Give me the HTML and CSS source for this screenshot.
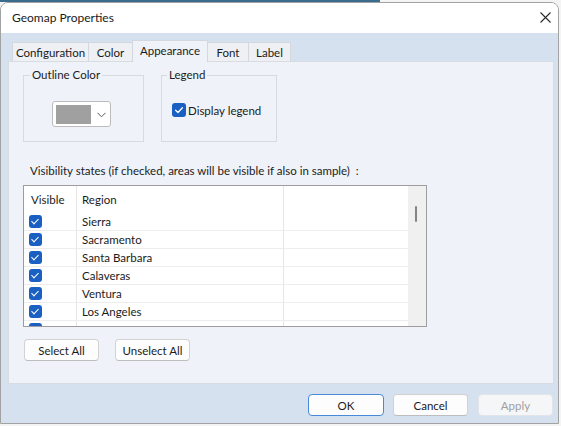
FILE: index.html
```html
<!DOCTYPE html>
<html lang="en">
<head>
<meta charset="utf-8">
<title>Geomap Properties</title>
<link rel="stylesheet" href="styles.css">
</head>
<body>
<div class="topstrip"></div>
<div class="dialog">
  <div class="titlebar">
    <span class="title">Geomap Properties</span>
    <svg class="close" width="11" height="11" viewBox="0 0 11 11"><path d="M0.5 0.5 L10.5 10.5 M10.5 0.5 L0.5 10.5" stroke="#2b2b2b" stroke-width="1.1" fill="none"/></svg>
  </div>
  <div class="client">
    <div class="tabs">
      <div class="tab t-config">Configuration</div>
      <div class="tab t-color">Color</div>
      <div class="tab t-appear active">Appearance</div>
      <div class="tab t-font">Font</div>
      <div class="tab t-label">Label</div>
    </div>
    <div class="panel">
      <div class="groups">
        <fieldset class="group g-outline">
          <legend>Outline Color</legend>
          <div class="combo">
            <span class="swatch"></span>
            <svg class="chev" width="9" height="6" viewBox="0 0 9 6"><path d="M0.5 0.8 L4.5 4.8 L8.5 0.8" stroke="#5a5a5a" stroke-width="1" fill="none"/></svg>
          </div>
        </fieldset>
        <fieldset class="group g-legend">
          <legend>Legend</legend>
          <label class="check-row">
            <span class="cb"><svg width="14" height="14" viewBox="0 0 14 14"><rect x="0" y="0" width="14" height="14" rx="3" fill="#1a5fc2"/><path d="M3.6 7.2 L6 9.5 L10.4 4.8" stroke="#fff" stroke-width="1.3" fill="none" stroke-linecap="round" stroke-linejoin="round"/></svg></span>
            <span>Display legend</span>
          </label>
        </fieldset>
      </div>
      <div class="vis-label">Visibility states (if checked, areas will be visible if also in sample)&nbsp; :</div>
      <div class="list">
        <div class="grid">
          <div class="row head">
            <div class="c1">Visible</div>
            <div class="c2">Region</div>
            <div class="c3"></div>
          </div>
          <div class="row"><div class="c1"><span class="cbs"></span></div><div class="c2">Sierra</div><div class="c3"></div></div>
          <div class="row"><div class="c1"><span class="cbs"></span></div><div class="c2">Sacramento</div><div class="c3"></div></div>
          <div class="row"><div class="c1"><span class="cbs"></span></div><div class="c2">Santa Barbara</div><div class="c3"></div></div>
          <div class="row"><div class="c1"><span class="cbs"></span></div><div class="c2">Calaveras</div><div class="c3"></div></div>
          <div class="row"><div class="c1"><span class="cbs"></span></div><div class="c2">Ventura</div><div class="c3"></div></div>
          <div class="row"><div class="c1"><span class="cbs"></span></div><div class="c2">Los Angeles</div><div class="c3"></div></div>
          <div class="row"><div class="c1"><span class="cbs"></span></div><div class="c2"></div><div class="c3"></div></div>
        </div>
        <div class="vscroll"><span class="thumb"></span></div>
      </div>
      <div class="list-buttons">
        <button class="btn">Select All</button>
        <button class="btn">Unselect All</button>
      </div>
    </div>
    <div class="footer">
      <button class="btn default">OK</button>
      <button class="btn">Cancel</button>
      <button class="btn disabled">Apply</button>
    </div>
  </div>
</div>
</body>
</html>
```
FILE: styles.css
```css
* { box-sizing: border-box; }
html, body { margin: 0; padding: 0; }
body {
  background: #f4f4f4;
  font-family: Lato, "Liberation Sans", Arial, sans-serif;
  font-size: 11.5px;
  color: #1b1b1b;
  width: 561px;
  height: 426px;
  overflow: hidden;
}
.topstrip {
  height: 2px;
  width: 380px;
  background: #3b6c8e;
}
.dialog {
  width: 559px;
  height: 422px;
  border: 1px solid #a2a2a2;
  border-radius: 8px 8px 0 0;
  overflow: hidden;
  display: flex;
  flex-direction: column;
  background: #fff;
}
.titlebar {
  height: 30px;
  flex: none;
  background: #ffffff;
  display: flex;
  align-items: center;
  justify-content: space-between;
  padding: 0 7px 1px 11px;
}
.title { font-size: 12px; color: #1a1a1a; }
.close { display: block; }
.client {
  flex: 1;
  background: #d5e1ef;
  padding: 0 4px 0 7px;
  display: flex;
  flex-direction: column;
}
.tabs {
  height: 28px;
  flex: none;
  display: flex;
  align-items: flex-end;
  padding-left: 4px;
}
.tab {
  height: 19px;
  background: #eef0f4;
  border: 1px solid #d3d8df;
  border-bottom: none;
  display: flex;
  align-items: center;
  justify-content: center;
  color: #1b1b1b;
  margin-right: -1px;
}
.t-config { width: 77px; }
.t-color { width: 45px; }
.t-appear { width: 76px; }
.t-font { width: 42px; }
.t-label { width: 43px; }
.tab.active {
  height: 22px;
  background: #eff2f8;
  border-color: #d3d8df;
  margin-bottom: -1px;
  position: relative;
  z-index: 1;
  padding-bottom: 2px;
}
.panel {
  height: 323px;
  flex: none;
  background: #eff2f8;
  border: 1px solid #d8dce3;
  padding: 0 0 0 14px;
}
.groups {
  display: flex;
  gap: 17px;
  margin-top: 5px;
}
.group {
  margin: 0;
  padding: 0;
  border: 1px solid #d6dae1;
  height: 75px;
  min-width: 0;
}
.group legend {
  padding: 0 2px;
  margin-left: 6px;
  line-height: 16px;
  color: #1b1b1b;
}
.g-outline { width: 121px; }
.g-legend { width: 116px; }
.g-legend legend { margin-left: 5px; }
.combo {
  width: 59px;
  height: 26px;
  margin: 18px 0 0 28px;
  background: #fff;
  border: 1px solid #bcbcbc;
  border-radius: 3px;
  display: flex;
  align-items: center;
  padding: 0 0 0 3px;
}
.swatch {
  width: 35px;
  height: 19px;
  background: #a0a0a0;
}
.chev { margin-left: 6px; margin-top: 2px; }
.check-row {
  display: flex;
  align-items: center;
  gap: 2px;
  margin: 20px 0 0 10px;
}
.cb svg { display: block; }
.vis-label {
  margin-top: 21px;
  line-height: 16px;
  padding-left: 7px;
}
.list {
  margin-top: 6px;
  width: 404px;
  height: 142px;
  border: 1px solid #9d9d9d;
  background: #fff;
  display: flex;
  overflow: hidden;
}
.grid { width: 384px; flex: none; }
.row {
  display: flex;
  height: 18px;
  border-bottom: 1px solid #ededed;
  align-items: stretch;
}
.row.head { height: 27px; border-bottom: none; }
.row > div { display: flex; align-items: center; }
.c1 { width: 53px; padding-left: 5px; border-right: 1px solid #e6e6e6; }
.c2 { width: 207px; padding-left: 5px; border-right: 1px solid #e6e6e6; }
.c3 { flex: 1; }
.head .c1 { padding-left: 7px; }
.cbs {
  width: 13px;
  height: 13px;
  border-radius: 3px;
  background: #1a5fc2;
  position: relative;
  display: block;
}
.cbs::after {
  content: "";
  position: absolute;
  left: 4px;
  top: 2px;
  width: 3px;
  height: 6px;
  border: solid #fff;
  border-width: 0 1.3px 1.3px 0;
  transform: rotate(45deg);
}
.vscroll {
  flex: 1;
  background: #f0f0f0;
  position: relative;
}
.thumb {
  position: absolute;
  left: 7px;
  top: 20px;
  width: 2px;
  height: 16px;
  border-radius: 1px;
  background: #858585;
}
.list-buttons {
  display: flex;
  gap: 16px;
  margin-top: 12px;
  padding-left: 1px;
}
.btn {
  font-family: inherit;
  font-size: 11.5px;
  width: 75px;
  height: 22px;
  background: #fdfdfd;
  border: 1px solid #d2d2d2;
  border-bottom-color: #bdbdbd;
  border-radius: 4px;
  color: #1b1b1b;
  padding: 0;
}
.footer {
  display: flex;
  justify-content: flex-end;
  gap: 9px;
  padding: 10px 1px 0 0;
}
.btn.default {
  border: 1px solid #4a88d8;
  box-shadow: inset 0 0 0 1px #ffffff;
  width: 76px;
}
.btn.disabled {
  background: #f5f6f8;
  border-color: #e2e4e8;
  color: #a0a0a0;
  margin-left: 1px;
}
```
